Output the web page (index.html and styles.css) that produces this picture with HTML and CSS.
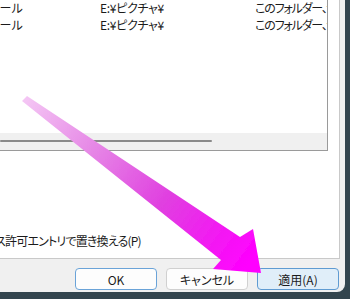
FILE: index.html
```html
<!DOCTYPE html>
<html lang="ja">
<head>
  <meta charset="UTF-8">
  <meta name="viewport" content="width=device-width, initial-scale=1.0">
  <title>セキュリティの詳細設定</title>
  <link rel="stylesheet" href="styles.css">
</head>
<body>
<div class="dialog">
  <div class="panel">
    <div class="entry-list">
      <div class="entry-row">
        <span class="col-name"><span class="cut-text">ロール</span></span>
        <span class="col-inherit">E:¥ピクチャ¥</span>
        <span class="col-apply">このフォルダー、サブフォルダーおよびファイル</span>
      </div>
      <div class="entry-row">
        <span class="col-name"><span class="cut-text">ロール</span></span>
        <span class="col-inherit">E:¥ピクチャ¥</span>
        <span class="col-apply">このフォルダー、サブフォルダーおよびファイル</span>
      </div>
      <div class="hscroll">
        <div class="hscroll-thumb"></div>
      </div>
    </div>
    <div class="replace-option">
      <span class="cut-text">ス許可エントリで置き換える(P)</span>
    </div>
  </div>

  <div class="button-bar">
    <button class="btn btn-default">OK</button>
    <button class="btn">キャンセル</button>
    <button class="btn btn-hover">適用(A)</button>
  </div>
</div>

<!-- annotation arrow drawn over the dialog -->
<svg class="pointer-arrow" width="350" height="299" viewBox="0 0 350 299">
  <defs>
    <linearGradient id="arrowFill" gradientUnits="userSpaceOnUse" x1="26" y1="97" x2="250" y2="262">
      <stop offset="0" stop-color="#f4c6f4"/>
      <stop offset="0.3" stop-color="#e688e6"/>
      <stop offset="0.62" stop-color="#e040e0"/>
      <stop offset="1" stop-color="#ff00ff"/>
    </linearGradient>
    <filter id="soft" x="-5%" y="-5%" width="110%" height="110%">
      <feGaussianBlur stdDeviation="0.5"/>
    </filter>
  </defs>
  <polygon points="27,96 240,237 253,229 261,273 213,269 221,260 22,101" fill="url(#arrowFill)" filter="url(#soft)"/>
</svg>
</body>
</html>
```

FILE: styles.css
```css
* { box-sizing: border-box; }
body {
  margin: 0;
  width: 350px;
  height: 299px;
  overflow: hidden;
  background-color: #33454e;
  font-family: "Noto Sans CJK JP", "Noto Sans", sans-serif;
  font-feature-settings: "palt";
  font-size: 12px;
  color: #1b1b1b;
  position: relative;
}
.dialog {
  width: 345px;
  height: 292px;
  background-color: #f0f0f0;
  border-bottom-right-radius: 8px;
  overflow: hidden;
  display: flex;
  flex-direction: column;
}
.panel {
  width: 340px;
  height: 259px;
  background-color: #ffffff;
  border-right: 1px solid #c9c9c9;
  border-bottom: 1px solid #c9c9c9;
  display: flex;
  flex-direction: column;
}
.entry-list {
  width: 328px;
  height: 151px;
  border-right: 1px solid #9a9a9a;
  border-bottom: 1px solid #9a9a9a;
  overflow: hidden;
  display: flex;
  flex-direction: column;
}
.entry-row {
  height: 16.5px;
  line-height: 16px;
  display: flex;
  white-space: nowrap;
}
.col-name {
  width: 100px;
  overflow: hidden;
}
.col-inherit {
  width: 155px;
  letter-spacing: -0.3px;
}
.col-apply {
  flex: 1;
  overflow: hidden;
  letter-spacing: -1.2px;
}
.cut-text {
  display: inline-block;
  margin-left: -12px;
}
.hscroll {
  margin-top: auto;
  height: 17px;
  padding-top: 7px;
  background-color: #f0f0f0;
}
.hscroll-thumb {
  width: 212px;
  height: 2px;
  border-radius: 1px;
  background-color: #8a8a8a;
}
.replace-option {
  margin-top: auto;
  padding-bottom: 9px;
  line-height: 16px;
  white-space: nowrap;
  overflow: hidden;
  letter-spacing: -0.8px;
}
.replace-option .cut-text {
  margin-left: -5px;
}
.button-bar {
  display: flex;
  justify-content: flex-end;
  gap: 9px;
  padding: 9px 6px 0 0;
}
.btn {
  width: 82px;
  height: 22px;
  padding: 0;
  font-family: inherit;
  font-feature-settings: "palt";
  font-size: 12px;
  color: #1b1b1b;
  background-color: #fdfdfd;
  border: 1px solid #d0d0d0;
  border-radius: 4px;
}
.btn-default {
  border-color: #6aa3d8;
}
.btn-hover {
  background-color: #e0eef9;
  border-color: #5f9bd2;
}
.pointer-arrow {
  position: absolute;
  left: 0;
  top: 0;
  pointer-events: none;
}
```
